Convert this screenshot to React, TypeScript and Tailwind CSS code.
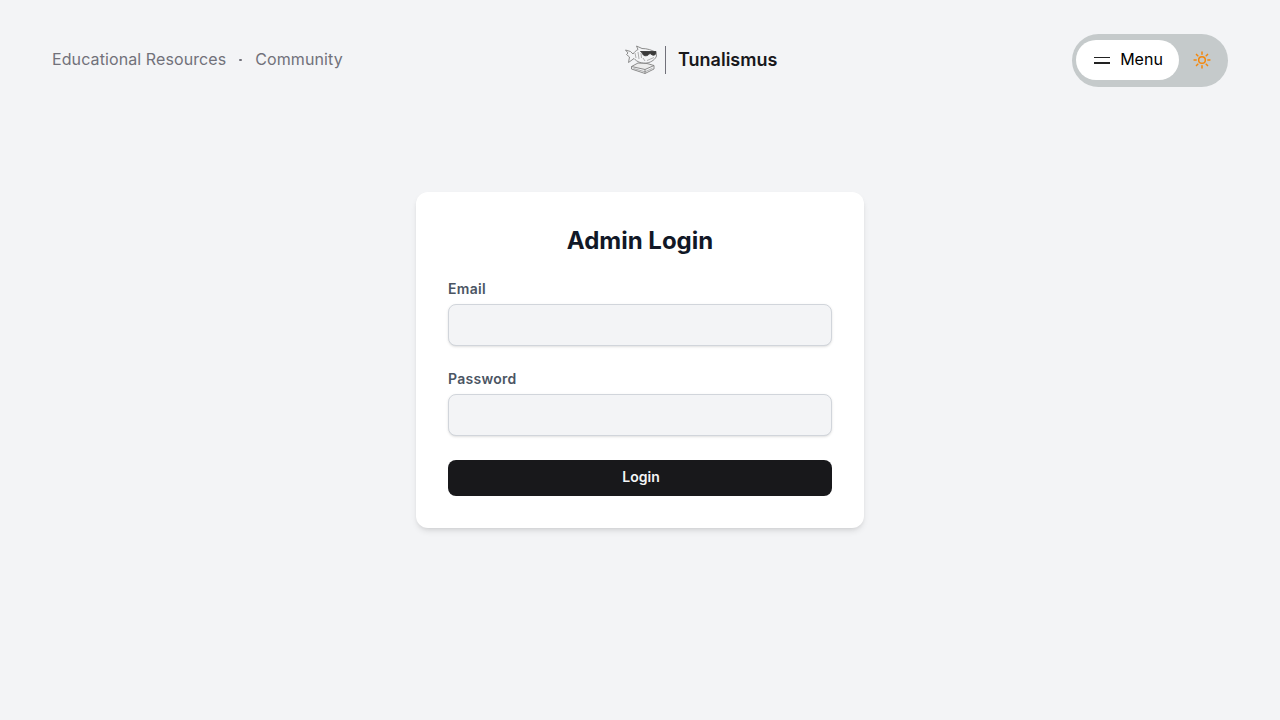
const font = { fontFamily: "Inter, 'Liberation Sans', sans-serif" };

function FishLogo() {
  return (
    <svg viewBox="0 0 32 30" className="h-[30px] w-[32px]" fill="none" stroke="#808080" strokeWidth="0.9" strokeLinejoin="round">
      <path d="M0.5 5 L5.5 6.5 L8 9 C9.5 7 11 5.5 13 4.5 L11.5 1 L17 3.5 C22 3.5 27 5 31 7.5 L31.5 11 C30.5 14 27 17 22 18 C17 18.8 12 17 9 13.5 L3.5 17.5 L4.5 12 L1.5 9.5 L3 8 Z" fill="#f3f4f6" />
      <path d="M10 8 L11 13 M13 7 L14 14 M16 8 L16.5 13" strokeWidth="0.6" />
      <path d="M15.5 6.5 L31 6.5 L30.5 9 C30 10.5 27 10.8 25.8 8.8 L24 8.8 C23.5 11 19 11.5 18 9.5 L17.5 8 Z" fill="#3a3a3a" stroke="#3a3a3a" />
      <path d="M22 15.5 L29 12.5 M18 13 L20 16" strokeWidth="0.6" />
      <path d="M6.5 21.5 L13 18 L22 18.5 L29 20.5 L20 24.5 Z" fill="#ececec" />
      <path d="M6.5 21.5 L6.5 24 L20 28.5 L29 24 L29 20.5 M20 24.5 L20 28.5" />
      <path d="M8.5 23.5 L20 26.8 L27.5 23.3" strokeWidth="0.6" />
    </svg>
  );
}

function SunIcon() {
  return (
    <svg viewBox="0 0 24 24" className="h-5 w-5" fill="none" stroke="#f5870a" strokeWidth="1.8" strokeLinecap="round">
      <circle cx="12" cy="12" r="4" />
      <path d="M12 2.5v2.5M12 19v2.5M2.5 12H5M19 12h2.5M5.3 5.3 7 7M17 17l1.7 1.7M5.3 18.7 7 17M17 7l1.7-1.7" />
    </svg>
  );
}

function Field({ label, type }: { label: string; type: string }) {
  return (
    <div>
      <label className="-mt-px mb-[5px] block text-sm leading-5 font-semibold tracking-[0.02em] text-[#4b5563]">{label}</label>
      <input
        type={type}
        className="block h-[42px] w-full rounded-lg border border-[#d1d5db] bg-[#f3f4f6] px-3 shadow-sm outline-none"
      />
    </div>
  );
}

export default function App() {
  return (
    <div className="min-h-[720px] bg-[#f3f4f6]" style={font}>
      <header className="flex items-start px-[52px] pt-[34px]">
        <nav className="flex h-[50px] w-[573px] items-center gap-[13px] text-base tracking-[0.006em] text-[#71717a]">
          <a>Educational Resources</a>
          <span className="h-[2px] w-[3px] translate-y-[1px] rounded-full bg-[#71717a]" />
          <a>Community</a>
        </nav>
        <div className="flex h-[52px] items-center gap-[8px]">
          <FishLogo />
          <div className="h-7 w-px bg-[#71717a]" />
          <span className="ml-[4px] text-lg font-semibold text-[#18181b]">Tunalismus</span>
        </div>
        <div className="flex flex-1 justify-end">
          <div className="flex h-[53px] w-[156px] items-start rounded-full bg-[#c5cacb] pt-[6px] pl-1">
            <button className="flex h-10 w-[103px] items-center justify-center gap-[10px] rounded-full bg-white pb-[3px] pl-[2px] text-base text-black">
              <span className="mt-[3px] flex w-4 flex-col gap-[4px]">
                <span className="h-[1.5px] bg-[#222]" />
                <span className="h-[1.5px] bg-[#222]" />
              </span>
              Menu
            </button>
            <div className="flex flex-1 justify-center pt-[10px] pr-[4px]">
              <SunIcon />
            </div>
          </div>
        </div>
      </header>

      <main className="flex justify-center pt-[105px]">
        <div className="w-[448px] rounded-xl bg-white p-8 shadow-md">
          <h1 className="pt-px text-center text-2xl leading-8 font-bold text-[#111827]">Admin Login</h1>
          <div className="mt-[23px] flex flex-col gap-6">
            <Field label="Email" type="email" />
            <Field label="Password" type="password" />
            <button className="h-9 rounded-lg bg-[#18181b] pb-[2px] pl-[2px] text-sm font-semibold text-[#f3f4f6]">Login</button>
          </div>
        </div>
      </main>
    </div>
  );
}
